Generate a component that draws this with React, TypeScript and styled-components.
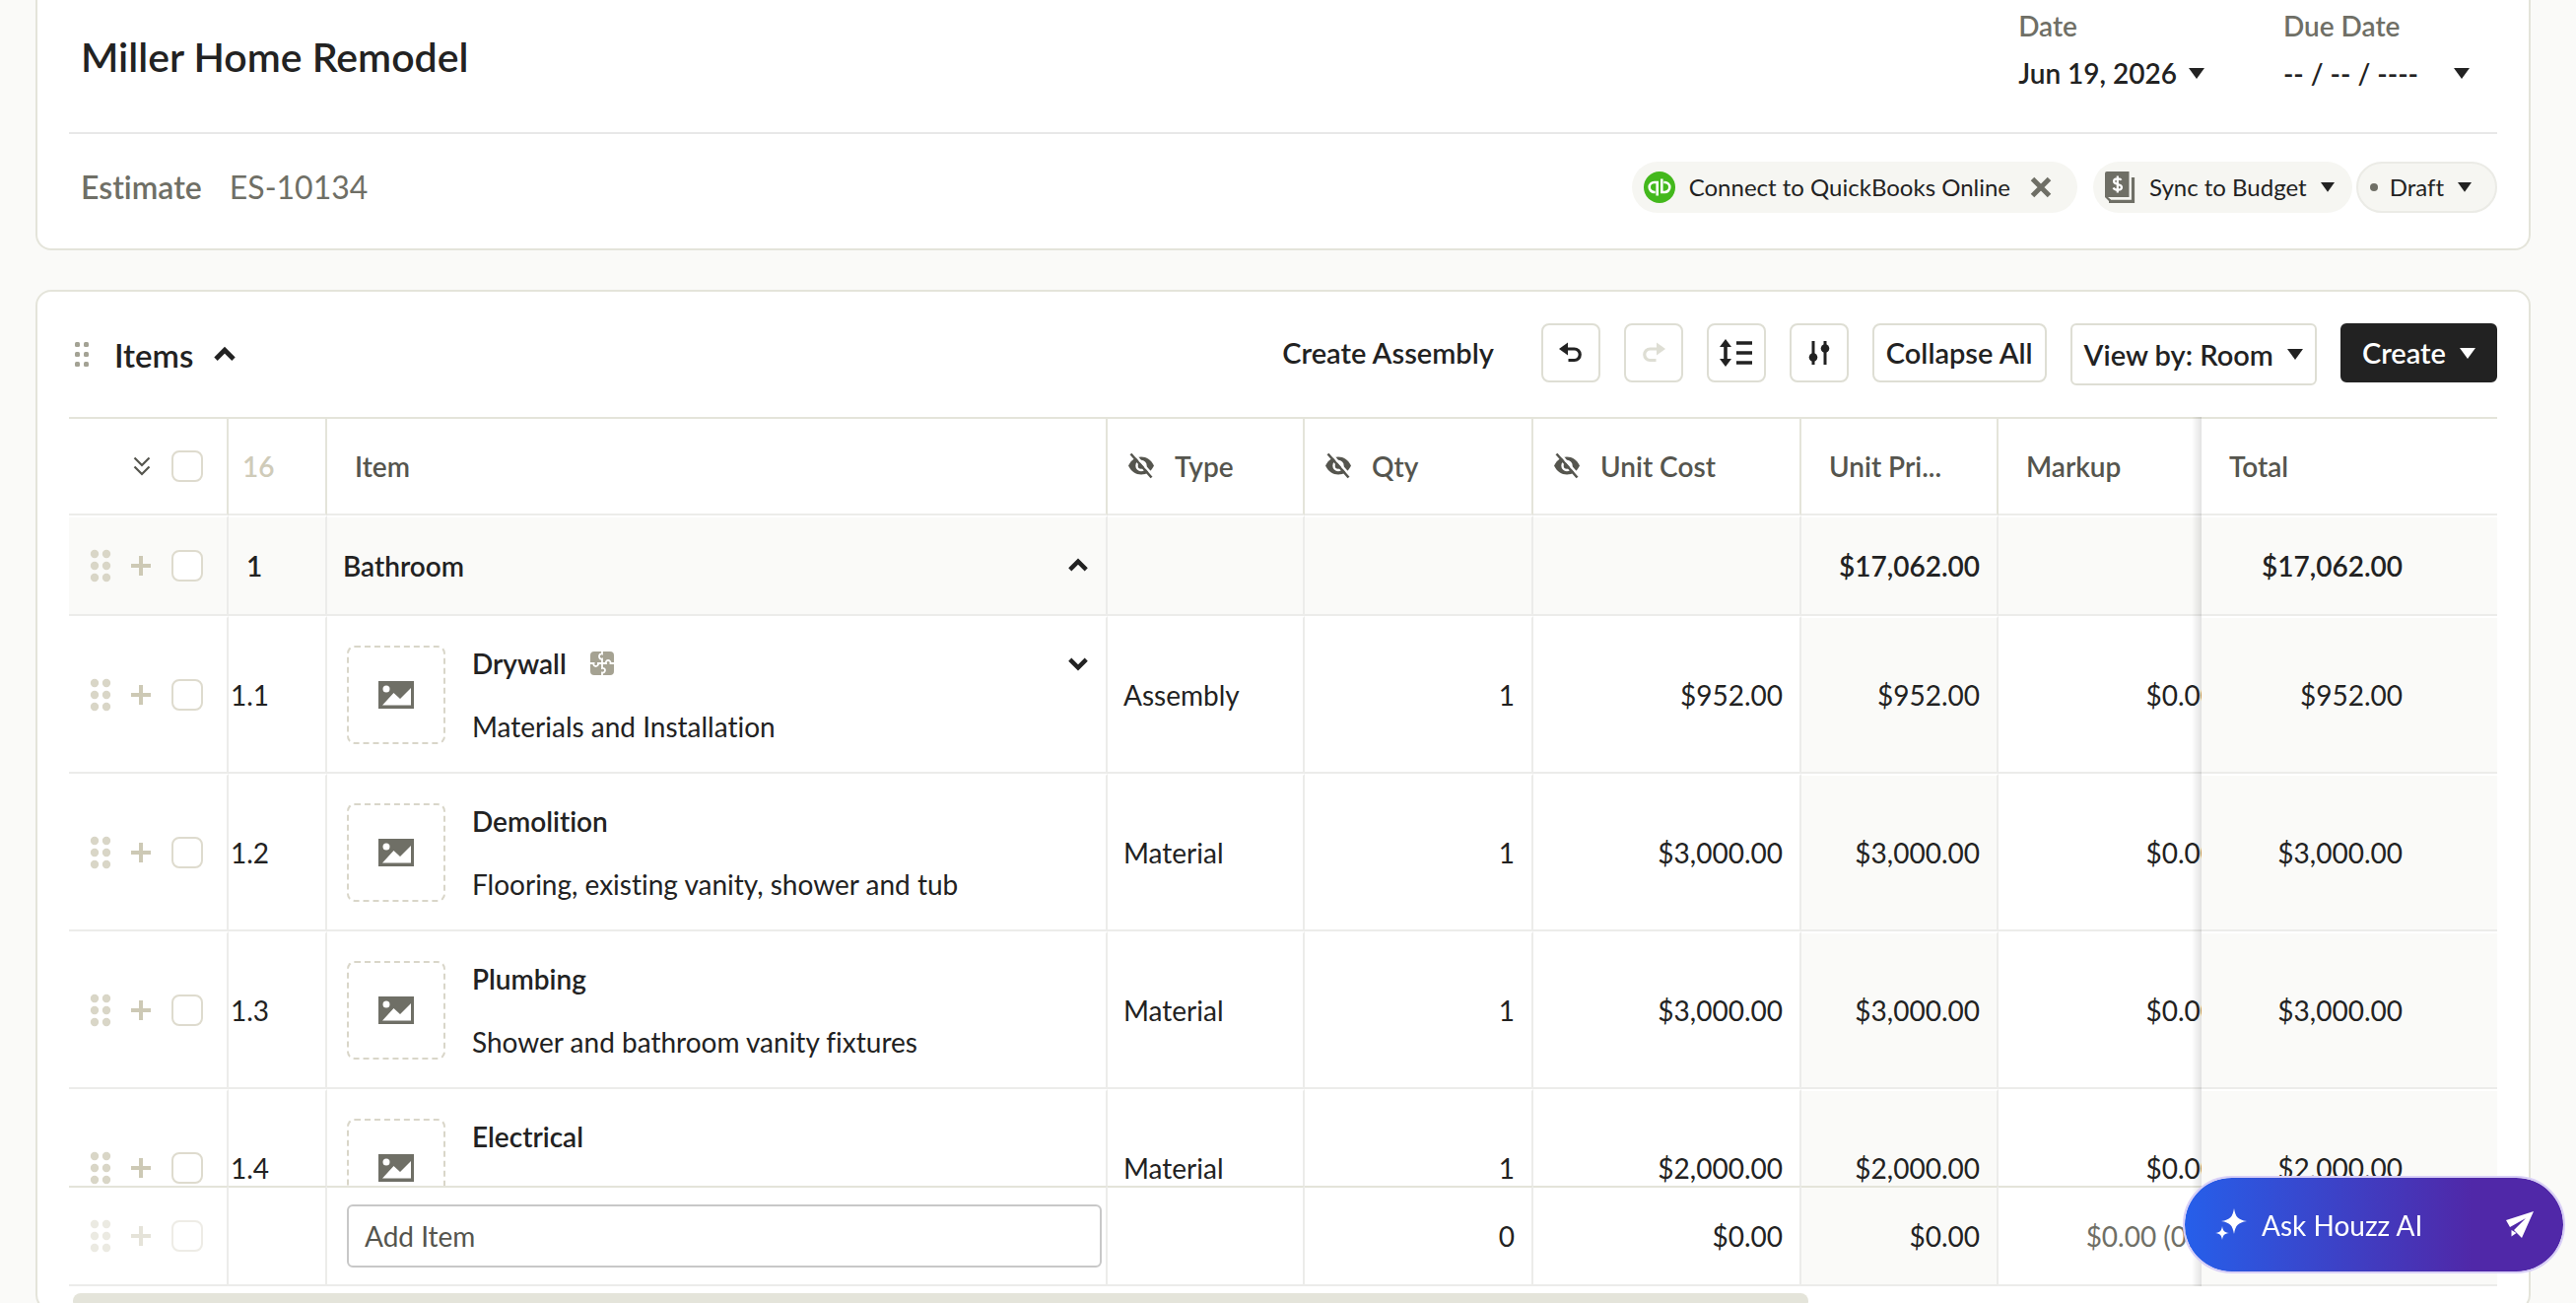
import React from "react";
import styled, { createGlobalStyle, css } from "styled-components";

const ink = "#222222";
const muted = "#6f6f66";
const line = "#e4e4da";
const faint = "#ececea";
const shade = "#fafaf8";

const GlobalStyle = createGlobalStyle`
  *, *::before, *::after { box-sizing: border-box; }
  body {
    margin: 0;
    background: ${shade};
    color: ${ink};
    font-family: Lato, "Liberation Sans", sans-serif;
    font-size: 28px;
    line-height: 36px;
    font-variant-ligatures: none;
  }
  button, input { font: inherit; color: inherit; }
  button { margin: 0; padding: 0; border: 0; background: none; cursor: pointer; }
  h1, h2, p { margin: 0; }
`;

const Page = styled.main`
  height: 100vh;
  overflow: hidden;
  padding: 0 46px 0 36px;
  display: flex;
  flex-direction: column;
  gap: 40px;
`;

const Card = styled.section<{ $flush?: boolean }>`
  flex: none;
  background: #fff;
  border: 2px solid ${line};
  border-radius: 16px;
  padding: 0 32px;
  ${(p) => p.$flush && css`
    border-top: 0;
    border-top-left-radius: 0;
    border-top-right-radius: 0;
  `}
`;

const TitleRow = styled.div`
  display: flex;
  align-items: flex-start;
  justify-content: space-between;
  height: 136px;
  padding: 8px 28px 0 12px;
  border-bottom: 2px solid #e8e8e8;
`;

const Title = styled.h1`
  padding-top: 24px;
  font-size: 41px;
  line-height: 52px;
  font-weight: 600;
`;

const Dates = styled.div`
  display: flex;
  gap: 80px;
`;

const DateField = styled.div`
  display: flex;
  flex-direction: column;
  gap: 12px;
  font-weight: 600;
`;

const FieldLabel = styled.span`
  color: ${muted};
`;

const DateButton = styled.button<{ $wide?: boolean }>`
  display: flex;
  align-items: center;
  gap: ${(p) => (p.$wide ? 36 : 12)}px;
  font-weight: 600;
`;

const MetaRow = styled.div`
  display: flex;
  align-items: center;
  justify-content: space-between;
  height: 116px;
  padding: 0 0 8px 12px;
`;

const DocName = styled.div`
  display: flex;
  align-items: center;
  gap: 28px;
  color: ${muted};
  font-size: 32px;
`;

const DocType = styled.span`
  font-weight: 600;
`;

const Chips = styled.div`
  display: flex;
  gap: 4px;
`;

const Chip = styled.div<{ $outlined?: boolean; $spaced?: boolean }>`
  display: flex;
  align-items: center;
  gap: 20px;
  height: 52px;
  padding: 0 ${(p) => (p.$spaced ? 26 : 18)}px 0 12px;
  margin-right: ${(p) => (p.$spaced ? 12 : 0)}px;
  border-radius: 26px;
  background: #f6f6f2;
  font-size: 24px;
  ${(p) => p.$outlined && css`
    border: 2px solid #ebebe6;
    padding: 0 24px 0 12px;
    gap: 12px;
  `}
`;

const ChipButton = styled.button`
  display: flex;
  align-items: center;
  gap: 14px;
`;

const Dot = styled.i`
  width: 8px;
  height: 8px;
  border-radius: 4px;
  background: ${muted};
`;

const Toolbar = styled.div`
  display: flex;
  align-items: flex-start;
  justify-content: space-between;
  height: 127px;
  padding: 32px 0 0 6px;
`;

const Heading = styled.div`
  display: flex;
  align-items: center;
  gap: 20px;
  height: 64px;
`;

const SectionTitle = styled.h2`
  font-size: 33px;
  line-height: 40px;
  font-weight: 600;
  padding-left: 6px;
`;

const Actions = styled.div`
  display: flex;
  align-items: flex-start;
  gap: 24px;
  font-size: 29px;
`;

const TextButton = styled.button`
  height: 60px;
  margin-right: 24px;
  font-weight: 600;
`;

const BoxButton = styled.button<{ $icon?: boolean; $tall?: boolean; $dark?: boolean }>`
  display: flex;
  align-items: center;
  justify-content: center;
  gap: 14px;
  height: ${(p) => (p.$tall ? 63 : 60)}px;
  width: ${(p) => (p.$icon ? "60px" : "auto")};
  padding: 0 ${(p) => (p.$icon ? 0 : p.$dark ? 20 : 12)}px;
  border: 2px solid ${(p) => (p.$dark ? ink : "#deded4")};
  border-radius: ${(p) => (p.$tall || p.$dark ? 6 : 8)}px;
  background: ${(p) => (p.$dark ? ink : "#fff")};
  color: ${(p) => (p.$dark ? "#fff" : ink)};
  font-weight: 600;
`;

const Scroller = styled.div`
  height: calc(100vh - 440px);
  overflow: hidden;
`;

const Grid = styled.table`
  width: calc(100% + 34px);
  table-layout: fixed;
  border-collapse: separate;
  border-spacing: 0;
`;

const Col = styled.col<{ $w?: number }>`
  width: ${(p) => (p.$w ? `${p.$w}px` : "auto")};
`;

type CellProps = {
  $pad?: number;
  $flush?: boolean;
  $right?: boolean;
  $shade?: boolean;
  $pinned?: boolean;
  $strong?: boolean;
  $quiet?: boolean;
};

const pinned = css`
  position: sticky;
  right: 0;
  z-index: 1;
  border-right: 0;
  &::before {
    content: "";
    position: absolute;
    top: -2px;
    bottom: -2px;
    left: -10px;
    width: 10px;
    background: linear-gradient(to right, rgba(0, 0, 0, 0), rgba(0, 0, 0, 0.11));
  }
`;

const HeadCell = styled.th<CellProps>`
  height: 100px;
  padding: 0 0 0 ${(p) => p.$pad ?? 28}px;
  border-top: 2px solid ${line};
  border-bottom: 2px solid ${faint};
  border-right: 2px solid ${line};
  background: #fff;
  color: ${(p) => (p.$quiet ? "#cfcbb9" : "#55554e")};
  font-weight: 600;
  text-align: left;
  white-space: nowrap;
  ${(p) => p.$pinned && pinned}
`;

const Cell = styled.td<CellProps>`
  padding: 0 ${(p) => (p.$flush ? 0 : p.$pinned ? 96 : 17)}px 0 ${(p) => p.$pad ?? 16}px;
  border-top: 2px solid #fff;
  border-bottom: 2px solid ${faint};
  border-right: 2px solid ${faint};
  background: ${(p) => (p.$shade ? shade : "#fff")};
  color: ${(p) => (p.$quiet ? muted : ink)};
  font-weight: ${(p) => (p.$strong ? 600 : 400)};
  text-align: ${(p) => (p.$right ? "right" : "left")};
  white-space: nowrap;
  ${(p) => p.$pinned && pinned}
`;

const Row = styled.tr<{ $h: number }>`
  height: ${(p) => p.$h}px;
`;

const Foot = styled.tfoot`
  position: sticky;
  bottom: 0;
  z-index: 2;
  ${Cell} { border-top-color: ${line}; }
`;

const Controls = styled.div<{ $dim?: boolean }>`
  display: flex;
  align-items: center;
  justify-content: flex-end;
  gap: 20px;
  padding-right: 24px;
  opacity: ${(p) => (p.$dim ? 0.5 : 1)};
`;

const IconButton = styled.button`
  display: flex;
  align-items: center;
  justify-content: center;
  flex: none;
`;

const Check = styled.input`
  appearance: none;
  flex: none;
  width: 32px;
  height: 32px;
  margin: 0 0 0 1px;
  border: 2px solid #dedbce;
  border-radius: 8px;
  background: #fff;
`;

const HeadLabel = styled.span`
  display: flex;
  align-items: center;
  gap: 20px;
`;

const Between = styled.div`
  display: flex;
  align-items: center;
  justify-content: space-between;
`;

const ItemBox = styled.div`
  display: flex;
  align-items: center;
  gap: 27px;
`;

const Thumb = styled.button`
  display: flex;
  align-items: center;
  justify-content: center;
  flex: none;
  width: 100px;
  height: 100px;
  border: 2px dashed #d9d6c9;
  border-radius: 8px;
`;

const ItemText = styled.div`
  flex: 1;
  display: flex;
  flex-direction: column;
  gap: 28px;
`;

const ItemName = styled.span`
  display: flex;
  align-items: center;
  gap: 24px;
  font-weight: 600;
`;

const AddInput = styled.input`
  display: block;
  width: calc(100% + 13px);
  height: 64px;
  padding: 0 16px;
  border: 2px solid #c8c8c8;
  border-radius: 6px;
  background: #fff;
  &::placeholder { color: #55554e; opacity: 1; }
`;

const Track = styled.div`
  padding: 7px 4px 0;
`;

const ScrollThumb = styled.div`
  width: 71.7%;
  height: 16px;
  border-radius: 8px;
  background: ${line};
`;

const AskButton = styled.button`
  position: fixed;
  right: 11px;
  bottom: 30px;
  z-index: 5;
  display: flex;
  align-items: center;
  gap: 14px;
  width: 388px;
  height: 99px;
  padding: 0 30px;
  border: 2px solid #d8cff7;
  border-radius: 50px;
  background: linear-gradient(90deg, #265fea 0%, #5028a8 76%);
  background-clip: padding-box;
  color: #fff;
`;

const AskText = styled.span`
  flex: 1;
  text-align: left;
`;

const Caret = ({ size = 16 }: { size?: number }) => (
  <svg width={size} height={size * 0.6875} viewBox="0 0 16 11" aria-hidden="true">
    <path d="M0 0h16L8 11z" fill="currentColor" />
  </svg>
);

const Chevron = ({ down, w = 22 }: { down?: boolean; w?: number }) => (
  <svg width={w} height={w} viewBox="0 0 20 20" aria-hidden="true">
    <path
      d={down ? "M2.500 6.500L10 14l7.500-7.500" : "M2.500 13.500L10 6l7.500 7.500"}
      fill="none"
      stroke={ink}
      strokeWidth="4"
    />
  </svg>
);

const Dots = () => (
  <svg width="22" height="34" viewBox="0 0 22 34" fill="#d9d6c7" aria-hidden="true">
    {[5, 17].map((x) => [5, 17, 29].map((y) => <circle key={`${x}${y}`} cx={x} cy={y} r="4.2" />))}
  </svg>
);

const SmallDots = () => (
  <svg width="14" height="26" viewBox="0 0 14 26" fill="#a3a294" aria-hidden="true">
    {[0, 9].map((x) => [0, 10, 20].map((y) => <rect key={`${x}${y}`} x={x} y={y} width="5" height="5" rx="1.5" />))}
  </svg>
);

const Plus = () => (
  <svg width="20" height="20" viewBox="0 0 20 20" aria-hidden="true">
    <path d="M10 0v20M0 10h20" stroke="#cdc9b5" strokeWidth="4" />
  </svg>
);

const DoubleChevron = () => (
  <svg width="18" height="20" viewBox="0 0 18 20" fill="none" stroke="#55554e" strokeWidth="2.2" aria-hidden="true">
    <path d="M1.500 1.500L9 9l7.500-7.500M1.500 10.500L9 18l7.500-7.500" />
  </svg>
);

const EyeOff = () => (
  <svg width="28" height="28" viewBox="0 0 28 28" aria-hidden="true">
    <path d="M1 13.500C4 7.500 8.500 4.500 14 4.500S24 7.500 27 13.500C24 19.500 19.500 22.500 14 22.500S4 19.500 1 13.500z" fill="#55554e" />
    <circle cx="14" cy="13.500" r="4.500" fill="none" stroke="#fff" strokeWidth="2.400" />
    <path d="M6 .5l20 23" stroke="#fff" strokeWidth="2.600" />
    <path d="M3.500 1.500l21 24" stroke="#55554e" strokeWidth="2.600" />
  </svg>
);

const Picture = () => (
  <svg width="36" height="28" viewBox="0 0 36 28" aria-hidden="true">
    <path d="M0 0h36v28H0z" fill={muted} />
    <circle cx="8" cy="8" r="3.500" fill="#fff" />
    <path d="M4 24.500L15.500 12l6.500 6L33 7v17.500z" fill="#fff" />
  </svg>
);

const Puzzle = () => (
  <svg width="24" height="24" viewBox="0 0 24 24" aria-hidden="true">
    <rect width="24" height="24" rx="4" fill="#a5a292" />
    <path
      d="M12 0v2.500c-4-1-4 6 0 5V17c4-1 4 5 0 4.500V24M0 12h3.500c-1 4 5 4 4.500 0h8c-1-4 5-4 4.500 0H24"
      fill="none"
      stroke="#fff"
      strokeWidth="1.800"
    />
  </svg>
);

const QuickBooks = () => (
  <svg width="32" height="32" viewBox="0 0 32 32" fill="none" stroke="#fff" strokeWidth="2.600" aria-hidden="true">
    <circle cx="16" cy="16" r="16" fill="#43b81c" stroke="none" />
    <path d="M13.700 24.500V11h-3a5 5 0 0 0 0 10h1M18.300 7.500V21h3a5 5 0 0 0 0-10h-1" />
  </svg>
);

const Ledger = () => (
  <svg width="31" height="32" viewBox="0 0 31 32" aria-hidden="true">
    <path d="M2 0h22.500v26H0V2a2 2 0 0 1 2-2z" fill={muted} />
    <path d="M0 26l6 6v-3.500L3 26z" fill={muted} />
    <path d="M4 30.300h24.500V6" fill="none" stroke={muted} strokeWidth="3.200" />
    <path d="M16.500 8.800c-1-2-7.500-2-7.500 1.200 0 4 8 2 8 6 0 3.500-7 3.500-8.500 .5M12.800 4.500v17" fill="none" stroke="#fff" strokeWidth="2.200" />
  </svg>
);

const Cross = () => (
  <svg width="22" height="22" viewBox="0 0 22 22" aria-hidden="true">
    <path d="M2.500 2.500l17 17M19.500 2.500l-17 17" stroke={muted} strokeWidth="5" />
  </svg>
);

const Undo = ({ flip }: { flip?: boolean }) => (
  <svg width="24" height="24" viewBox="0 0 24 24" aria-hidden="true">
    <g transform={flip ? "translate(24 0) scale(-1 1)" : undefined}>
      <path d="M0 8L9 1.500v13z" fill={flip ? "#deded4" : ink} />
      <path d="M6 8h9.500a5.500 5.500 0 0 1 0 11.500H9.500" fill="none" stroke={flip ? "#deded4" : ink} strokeWidth="3.200" />
    </g>
  </svg>
);

const RowHeight = () => (
  <svg width="34" height="30" viewBox="0 0 34 30" aria-hidden="true">
    <path d="M6 5v20M17 5h16M17 15h16M17 25h16" stroke={ink} strokeWidth="3.600" />
    <path d="M0 9L6 1l6 8zM0 21L6 29l6-8z" fill={ink} />
  </svg>
);

const Sliders = () => (
  <svg width="22" height="26" viewBox="0 0 22 26" aria-hidden="true">
    <path d="M5 1v24M17 1v24" stroke={ink} strokeWidth="3" />
    <circle cx="5" cy="17.500" r="4.300" fill={ink} />
    <circle cx="17" cy="8.500" r="4.300" fill={ink} />
  </svg>
);

const Sparkles = () => (
  <svg width="34" height="34" viewBox="0 0 34 34" fill="#fff" aria-hidden="true">
    <path d="M20 0c1.500 9 4 11.500 13 13-9 1.500-11.500 4-13 13-1.500-9-4-11.500-13-13 9-1.500 11.500-4 13-13z" />
    <path d="M8 18c.8 5 2 6.200 7 7-5 .8-6.200 2-7 7-.8-5-2-6.200-7-7 5-.8 6.200-2 7-7z" />
  </svg>
);

const Send = () => (
  <svg width="28" height="28" viewBox="0 0 28 28" fill="#fff" aria-hidden="true">
    <path d="M28 0L0 9l4 7 16-9L8 19l8 8z" />
    <path d="M5.500 19v6.500l5-3.500z" />
  </svg>
);

const RowControls = ({ name, dim }: { name: string; dim?: boolean }) => (
  <Controls $dim={dim}>
    <IconButton aria-label={`Move ${name}`}><Dots /></IconButton>
    <IconButton aria-label={`Add below ${name}`}><Plus /></IconButton>
    <Check type="checkbox" aria-label={`Select ${name}`} />
  </Controls>
);

const items = [
  { no: "1.1", name: "Drywall", note: "Materials and Installation", type: "Assembly", cost: "$952.00", assembly: true },
  { no: "1.2", name: "Demolition", note: "Flooring, existing vanity, shower and tub", type: "Material", cost: "$3,000.00" },
  { no: "1.3", name: "Plumbing", note: "Shower and bathroom vanity fixtures", type: "Material", cost: "$3,000.00" },
  { no: "1.4", name: "Electrical", note: "", type: "Material", cost: "$2,000.00" },
];

export default function App() {
  return (
    <>
      <GlobalStyle />
      <Page>
        <Card $flush>
          <TitleRow>
            <Title>Miller Home Remodel</Title>
            <Dates>
              <DateField>
                <FieldLabel id="date">Date</FieldLabel>
                <DateButton aria-describedby="date">Jun 19, 2026 <Caret /></DateButton>
              </DateField>
              <DateField>
                <FieldLabel id="due">Due Date</FieldLabel>
                <DateButton $wide aria-describedby="due">-- / -- / ---- <Caret /></DateButton>
              </DateField>
            </Dates>
          </TitleRow>
          <MetaRow>
            <DocName>
              <DocType>Estimate</DocType>
              <span>ES-10134</span>
            </DocName>
            <Chips>
              <Chip $spaced>
                <ChipButton><QuickBooks />Connect to QuickBooks Online</ChipButton>
                <IconButton aria-label="Dismiss"><Cross /></IconButton>
              </Chip>
              <Chip>
                <ChipButton><Ledger />Sync to Budget <Caret size={14} /></ChipButton>
              </Chip>
              <Chip $outlined>
                <Dot />
                <ChipButton>Draft <Caret size={14} /></ChipButton>
              </Chip>
            </Chips>
          </MetaRow>
        </Card>

        <Card>
          <Toolbar>
            <Heading>
              <IconButton aria-label="Move section"><SmallDots /></IconButton>
              <SectionTitle>Items</SectionTitle>
              <IconButton aria-label="Collapse section"><Chevron w={24} /></IconButton>
            </Heading>
            <Actions>
              <TextButton>Create Assembly</TextButton>
              <BoxButton $icon aria-label="Undo"><Undo /></BoxButton>
              <BoxButton $icon aria-label="Redo" disabled><Undo flip /></BoxButton>
              <BoxButton $icon aria-label="Row height"><RowHeight /></BoxButton>
              <BoxButton $icon aria-label="Adjust columns"><Sliders /></BoxButton>
              <BoxButton>Collapse All</BoxButton>
              <BoxButton $tall>View by: Room <Caret /></BoxButton>
              <BoxButton $dark>Create <Caret /></BoxButton>
            </Actions>
          </Toolbar>

          <Scroller>
            <Grid>
              <colgroup>
                <Col $w={162} />
                <Col $w={100} />
                <Col />
                <Col $w={200} />
                <Col $w={232} />
                <Col $w={272} />
                <Col $w={200} />
                <Col $w={240} />
                <Col $w={300} />
              </colgroup>
              <thead>
                <tr>
                  <HeadCell $pad={0}>
                    <Controls>
                      <IconButton aria-label="Expand all"><DoubleChevron /></IconButton>
                      <Check type="checkbox" aria-label="Select all" />
                    </Controls>
                  </HeadCell>
                  <HeadCell $pad={14} $quiet>16</HeadCell>
                  <HeadCell>Item</HeadCell>
                  <HeadCell $pad={20}><HeadLabel><EyeOff />Type</HeadLabel></HeadCell>
                  <HeadCell $pad={20}><HeadLabel><EyeOff />Qty</HeadLabel></HeadCell>
                  <HeadCell $pad={20}><HeadLabel><EyeOff />Unit Cost</HeadLabel></HeadCell>
                  <HeadCell>Unit Pri...</HeadCell>
                  <HeadCell>Markup</HeadCell>
                  <HeadCell $pinned>Total</HeadCell>
                </tr>
              </thead>
              <tbody>
                <Row $h={102}>
                  <Cell $pad={0} $flush $shade><RowControls name="Bathroom" /></Cell>
                  <Cell $shade $strong $pad={18}>1</Cell>
                  <Cell $shade $strong>
                    <Between>
                      Bathroom
                      <IconButton aria-label="Collapse Bathroom"><Chevron /></IconButton>
                    </Between>
                  </Cell>
                  <Cell $shade />
                  <Cell $shade />
                  <Cell $shade />
                  <Cell $shade $strong $right>$17,062.00</Cell>
                  <Cell $shade />
                  <Cell $shade $strong $right $pinned>$17,062.00</Cell>
                </Row>
                {items.map((item) => (
                  <Row $h={160} key={item.no}>
                    <Cell $pad={0} $flush><RowControls name={item.name} /></Cell>
                    <Cell $pad={2}>{item.no}</Cell>
                    <Cell $pad={20}>
                      <ItemBox>
                        <Thumb aria-label={`Add image to ${item.name}`}><Picture /></Thumb>
                        <ItemText>
                          <Between>
                            <ItemName>{item.name}{item.assembly && <Puzzle />}</ItemName>
                            {item.assembly && (
                              <IconButton aria-label="Expand Drywall"><Chevron down /></IconButton>
                            )}
                          </Between>
                          <p>{item.note || "\u00a0"}</p>
                        </ItemText>
                      </ItemBox>
                    </Cell>
                    <Cell>{item.type}</Cell>
                    <Cell $right>1</Cell>
                    <Cell $right>{item.cost}</Cell>
                    <Cell $right $shade>{item.cost}</Cell>
                    <Cell $right>$0.00</Cell>
                    <Cell $right $shade $pinned>{item.cost}</Cell>
                  </Row>
                ))}
              </tbody>
              <Foot>
                <Row $h={102}>
                  <Cell $pad={0} $flush><RowControls name="new item" dim /></Cell>
                  <Cell />
                  <Cell $pad={20}><AddInput aria-label="Add Item" placeholder="Add Item" /></Cell>
                  <Cell />
                  <Cell $right>0</Cell>
                  <Cell $right>$0.00</Cell>
                  <Cell $right $shade>$0.00</Cell>
                  <Cell $right $quiet>$0.00 (0%)</Cell>
                  <Cell $shade $pinned />
                </Row>
              </Foot>
            </Grid>
          </Scroller>
          <Track><ScrollThumb /></Track>
        </Card>
      </Page>
      <AskButton>
        <Sparkles />
        <AskText>Ask Houzz AI</AskText>
        <Send />
      </AskButton>
    </>
  );
}
